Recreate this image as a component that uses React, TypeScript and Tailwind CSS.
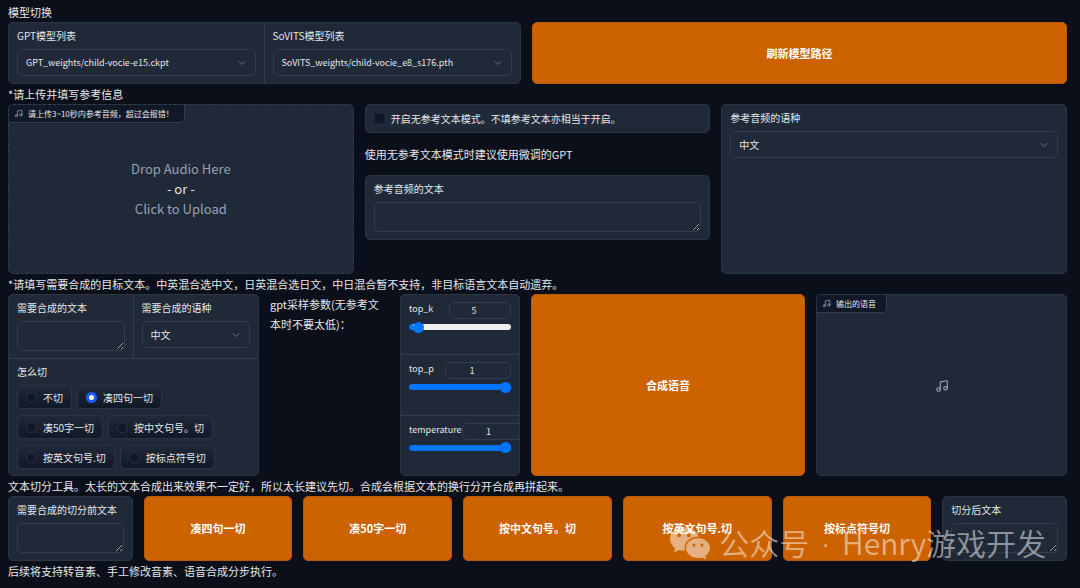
import { useState } from 'react';
import type { ReactNode } from 'react';
import { ChevronDown, Music } from 'lucide-react';
import clsx from 'clsx';

const SPLIT_MODES = ['不切', '凑四句一切', '凑50字一切', '按中文句号。切', '按英文句号.切', '按标点符号切'];
const SPLIT_TOOLS = SPLIT_MODES.slice(1);

const PANEL = 'overflow-hidden rounded-[5px] border border-[#2b3645] bg-[#1f2937]';
const FIELD = 'block w-full rounded-[5px] border border-[#323d4d] bg-[#1f2937] text-gray-200 outline-none focus:border-blue-500';

interface SelectFieldProps {
  id: string;
  label: string;
  options: string[];
  className?: string;
  textClass?: string;
}

const SelectField = ({ id, label, options, className, textClass = 'text-[10px]' }: SelectFieldProps) => (
  <div className={clsx('min-w-0 px-2 pt-1.5 pb-[7px]', className)}>
    <label htmlFor={id} className="mb-1.5 block text-[10px] leading-[14px]">{label}</label>
    <div className="relative">
      <select id={id} className={clsx(FIELD, textClass, 'h-[27px] appearance-none pr-6 pl-2')}>
        {options.map((option) => (
          <option key={option}>{option}</option>
        ))}
      </select>
      <ChevronDown className="pointer-events-none absolute top-2 right-2 h-3 w-3 text-gray-500" strokeWidth={2} />
    </div>
  </div>
);

const TextField = ({ id, label, className }: { id: string; label: string; className?: string }) => (
  <div className={clsx('min-w-0 px-2 pt-1.5 pb-[7px]', className)}>
    <label htmlFor={id} className="mb-1.5 block text-[10px] leading-[14px] whitespace-nowrap">{label}</label>
    <textarea id={id} rows={1} className={clsx(FIELD, 'h-[30px] resize-y px-2 py-1.5 text-[10px]')} />
  </div>
);

interface SliderFieldProps {
  id: string;
  label: string;
  min: number;
  max: number;
  step: number;
  initial: number;
  inputClass: string;
}

const SliderField = ({ id, label, min, max, step, initial, inputClass }: SliderFieldProps) => {
  const [value, setValue] = useState(initial);
  const percent = ((value - min) / (max - min)) * 100;

  return (
    <div className="flex-1 border-b border-[#323d4d] px-2 pt-[7px] last:border-b-0">
      <div className="flex justify-between">
        <label htmlFor={id} className="text-[9px] leading-[14px]">{label}</label>
        <input
          type="number"
          aria-label={label}
          value={value}
          min={min}
          max={max}
          step={step}
          onChange={(e) => setValue(Number(e.target.value))}
          className={clsx(
            'h-[17px] shrink-0 rounded-[5px] border border-[#323d4d] pr-3 text-center text-[9px] outline-none [appearance:textfield] [&::-webkit-inner-spin-button]:appearance-none',
            inputClass,
          )}
        />
      </div>
      <input
        id={id}
        type="range"
        value={value}
        min={min}
        max={max}
        step={step}
        onChange={(e) => setValue(Number(e.target.value))}
        style={{ backgroundImage: `linear-gradient(to right, #0075ff ${percent}%, #efefef ${percent}%)` }}
        className="my-[5px] block h-1.5 w-full appearance-none rounded-full [&::-webkit-slider-thumb]:h-[11px] [&::-webkit-slider-thumb]:w-[11px] [&::-webkit-slider-thumb]:appearance-none [&::-webkit-slider-thumb]:rounded-full [&::-webkit-slider-thumb]:bg-[#0075ff]"
      />
    </div>
  );
};

const PrimaryButton = ({ children }: { children: ReactNode }) => (
  <button
    type="button"
    className="cursor-pointer rounded-[5px] border border-[#b85a04] bg-[#cc6200] text-[11px] font-bold text-white hover:bg-[#d96a04]"
  >
    {children}
  </button>
);

const AudioTag = ({ children }: { children: ReactNode }) => (
  <div className="flex h-[18px] items-center gap-[5px] self-start rounded-br-[5px] border-r border-b border-[#323d4d] bg-[#111827] pr-2.5 pl-[5px] text-[8px] whitespace-nowrap">
    <Music className="h-[9px] w-[9px] text-gray-400" strokeWidth={2} />
    {children}
  </div>
);

const Note = ({ children }: { children: ReactNode }) => (
  <p className="text-[11px] leading-5 text-gray-200">{children}</p>
);

const Watermark = () => (
  <div className="pointer-events-none absolute right-[34px] bottom-[25px] flex items-center gap-2 text-white/50">
    <svg viewBox="0 0 42 34" className="h-[34px] w-[42px]" fill="currentColor" fillRule="evenodd">
      <path d="M15 1C6.800 1 1 6.400 1 13c0 3.800 2 7 5.200 9.200L5 26.500l5-2.600c1.600.5 3.300.7 5 .7h1.100A10.500 10.500 0 0 1 15.600 22c0-6.500 6-11.300 13.200-11.300h.8C28.200 5 22.200 1 15 1Zm-4.700 6.400a1.900 1.900 0 1 1 0 3.800 1.900 1.900 0 0 1 0-3.800Zm9.500 0a1.900 1.900 0 1 1 0 3.800 1.900 1.900 0 0 1 0-3.800Z" />
      <path d="M29 12.200c-6.700 0-12 4.400-12 9.900s5.300 9.900 12 9.900c1.400 0 2.800-.2 4-.6l4.300 2.200-1.100-3.700c3-1.900 4.800-4.700 4.800-7.800 0-5.500-5.300-9.900-12-9.900Zm-4.100 5.200a1.600 1.600 0 1 1 0 3.200 1.600 1.600 0 0 1 0-3.200Zm8 0a1.600 1.600 0 1 1 0 3.200 1.600 1.600 0 0 1 0-3.200Z" />
    </svg>
    <span className="text-[30px] leading-9 font-[350] whitespace-nowrap">
      公众号 <span className="px-1.5 font-['Noto_Sans',sans-serif]">·</span> Henry游戏开发
    </span>
  </div>
);

export default function App() {
  const [splitMode, setSplitMode] = useState('凑四句一切');

  return (
    <div className="min-h-screen bg-[#0b0f19] font-['Noto_Sans_CJK_SC',sans-serif] text-gray-200">
      <main className="relative pt-0.5 pr-[13px] pb-1.5 pl-2">
        <Note>模型切换</Note>
        <section className="grid grid-cols-[513fr_535fr] gap-[11px]">
          <div className={clsx(PANEL, 'grid grid-cols-2')}>
            <SelectField
              id="gpt-model"
              label="GPT模型列表"
              options={['GPT_weights/child-vocie-e15.ckpt']}
              className="border-r border-[#323d4d]"
              textClass="text-[9px]"
            />
            <SelectField
              id="sovits-model"
              label="SoVITS模型列表"
              options={['SoVITS_weights/child-vocie_e8_s176.pth']}
              textClass="text-[9px]"
            />
          </div>
          <PrimaryButton>刷新模型路径</PrimaryButton>
        </section>

        <Note>*请上传并填写参考信息</Note>
        <section className="grid min-h-[170px] grid-cols-3 gap-[11px]">
          <div className="flex flex-col overflow-hidden rounded-[5px] border border-dashed border-[#323d4d] bg-[#1f2937]">
            <AudioTag>请上传3~10秒内参考音频，超过会报错！</AudioTag>
            <button type="button" className="flex-1 cursor-pointer pb-[18px] text-[13px] leading-5 text-gray-400">
              <span className="block">Drop Audio Here</span>
              <span className="block text-gray-200">- or -</span>
              <span className="block">Click to Upload</span>
            </button>
          </div>

          <div className="flex flex-col gap-[11px]">
            <div className={PANEL}>
              <label className="flex h-[27px] items-center gap-1.5 px-2 text-[10px]">
                <input
                  type="checkbox"
                  className="h-[11px] w-[11px] appearance-none rounded-[2px] border border-[#1b2433] bg-[#111827] checked:bg-blue-600"
                />
                开启无参考文本模式。不填参考文本亦相当于开启。
              </label>
            </div>
            <Note>使用无参考文本模式时建议使用微调的GPT</Note>
            <TextField id="ref-text" label="参考音频的文本" className={PANEL} />
          </div>

          <div className={PANEL}>
            <SelectField id="ref-language" label="参考音频的语种" options={['中文', '英文', '日文']} />
          </div>
        </section>

        <Note>*请填写需要合成的目标文本。中英混合选中文，日英混合选日文，中日混合暂不支持，非目标语言文本自动遗弃。</Note>
        <section className="grid grid-cols-[251fr_119fr_120fr_274fr_251fr] gap-[11px]">
          <div className={PANEL}>
            <div className="grid grid-cols-2 border-b border-[#323d4d]">
              <TextField id="target-text" label="需要合成的文本" className="border-r border-[#323d4d]" />
              <SelectField id="target-language" label="需要合成的语种" options={['中文', '英文', '日文']} />
            </div>
            <fieldset className="px-2 pt-1.5 pb-1.5">
              <legend className="float-left mb-1.5 w-full text-[10px] leading-[14px]">怎么切</legend>
              <div className="clear-both flex flex-wrap gap-x-[5px] gap-y-1.5">
                {SPLIT_MODES.map((mode) => (
                  <label
                    key={mode}
                    className="flex h-6 items-center gap-1.5 rounded-[5px] border border-[#2b3645] bg-linear-to-b from-[#1f2937] to-[#111827] px-2 text-[10px] whitespace-nowrap"
                  >
                    <input
                      type="radio"
                      name="split-mode"
                      checked={splitMode === mode}
                      onChange={() => setSplitMode(mode)}
                      className="h-[11px] w-[11px] appearance-none rounded-full border border-[#2b3645] bg-[#111827] checked:border-[3px] checked:border-blue-600 checked:bg-white"
                    />
                    {mode}
                  </label>
                ))}
              </div>
            </fieldset>
          </div>

          <Note>gpt采样参数(无参考文本时不要太低)：</Note>

          <div className={clsx(PANEL, 'flex flex-col')}>
            <SliderField id="top-k" label="top_k" min={1} max={100} step={1} initial={5} inputClass="w-[62px]" />
            <SliderField id="top-p" label="top_p" min={0} max={1} step={0.05} initial={1} inputClass="w-[66px]" />
            <SliderField id="temperature" label="temperature" min={0} max={1} step={0.05} initial={1} inputClass="w-[66px]" />
          </div>

          <PrimaryButton>合成语音</PrimaryButton>

          <div className={clsx(PANEL, 'flex flex-col')}>
            <AudioTag>输出的语音</AudioTag>
            <div className="flex flex-1 items-center justify-center pb-4">
              <Music className="h-3.5 w-3.5 text-gray-400" strokeWidth={2} />
            </div>
          </div>
        </section>

        <Note>文本切分工具。太长的文本合成出来效果不一定好，所以太长建议先切。合成会根据文本的换行分开合成再拼起来。</Note>
        <section className="grid grid-cols-[125fr_149fr_149fr_149fr_149fr_149fr_125fr] gap-[11px]">
          <TextField id="split-before" label="需要合成的切分前文本" className={PANEL} />
          {SPLIT_TOOLS.map((tool) => (
            <PrimaryButton key={tool}>{tool}</PrimaryButton>
          ))}
          <TextField id="split-after" label="切分后文本" className={PANEL} />
        </section>
        <Note>后续将支持转音素、手工修改音素、语音合成分步执行。</Note>

        <Watermark />
      </main>
    </div>
  );
}
